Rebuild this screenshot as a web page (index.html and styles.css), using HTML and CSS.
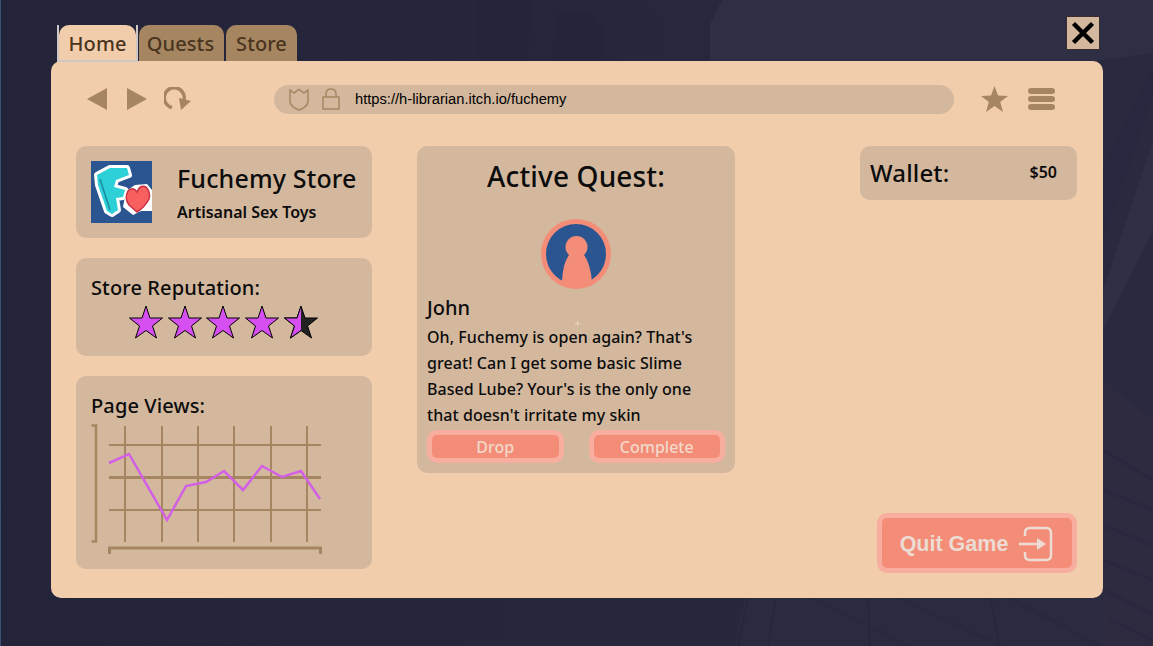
FILE: index.html
```html
<!DOCTYPE html>
<html lang="en">
<head>
  <meta charset="UTF-8">
  <title>Fuchemy Store</title>
  <link rel="stylesheet" href="styles.css">
</head>
<body>
  <!-- faint city backdrop -->
  <svg class="backdrop" viewBox="0 0 1153 646" aria-hidden="true">
    <polygon points="710,0 1153,0 1153,53 930,85 710,85" fill="#2e2e45"/>
    <polygon points="475,0 530,0 528,62 476,62" fill="#24253b"/>
    <polygon points="556,12 590,12 606,30 600,62 552,62" fill="#24253b"/>
    <polygon points="636,0 722,0 708,28 706,62 656,62 664,28" fill="#27273d"/>
    <polygon points="1103,290 1153,140 1153,230 1103,330" fill="#2e2e44"/>
    <polygon points="1103,170 1153,70 1153,95 1103,240" fill="#272740"/>
    <polygon points="745,598 1103,598 1153,590 1153,646 735,646" fill="#2c2a41"/>
    <polygon points="1103,380 1153,420 1153,646 1103,646" fill="#2e2a40"/>
    <path d="M1103 450 L1153 480 M1103 490 L1153 510 M1103 525 L1153 545 M1103 560 L1153 580 M1103 590 L1153 615 M1110 620 L1153 640" stroke="#29283f" stroke-width="3" fill="none"/>
    <path d="M738 646 L748 598 M768 646 L776 598 M870 646 L868 598 M1000 646 L990 598" stroke="#26263c" stroke-width="2" fill="none"/>
    <path d="M812 598 L910 646 M900 598 L1000 646 M1010 598 L1100 646" stroke="#29283f" stroke-width="3" fill="none"/>
  </svg>

  <button class="close-button" aria-label="Close">
    <svg viewBox="0 0 32 32" width="32" height="32"><path d="M6.500 6.500 L25.500 25.500 M25.500 6.500 L6.500 25.500" stroke="#000" stroke-width="4.500"/></svg>
  </button>

  <div class="app">
    <div class="tabs">
      <div class="tab tab-active"><span class="tab-label">Home</span></div>
      <div class="tab tab-quests">Quests</div>
      <div class="tab tab-store">Store</div>
    </div>

    <div class="window">
      <div class="toolbar">
        <div class="nav-icons">
          <svg width="20" height="22" viewBox="0 0 20 22"><polygon points="0,11 20,0 20,22" fill="#a58660"/></svg>
          <svg width="20" height="22" viewBox="0 0 20 22"><polygon points="0,0 20,11 0,22" fill="#a58660"/></svg>
          <svg width="27" height="24" viewBox="0 0 27 24">
            <path d="M8 20.500 A10 10 0 1 1 20 13" fill="none" stroke="#a58660" stroke-width="3.500"/>
            <polygon points="15,11 27,14 17,23" fill="#a58660"/>
          </svg>
        </div>

        <div class="url-bar">
          <svg width="20" height="23" viewBox="0 0 20 23"><path d="M1 2 L5 5 L10 1.500 L15 5 L19 2 V14 Q18 19 10 22 Q2 19 1 14 Z" fill="none" stroke="#a58660" stroke-width="1.500"/></svg>
          <svg width="18" height="22" viewBox="0 0 18 22">
            <rect x="1" y="9" width="16" height="12" fill="none" stroke="#a58660" stroke-width="1.500"/>
            <path d="M4 9 V6 Q4 1 9 1 Q14 1 14 6 V9" fill="none" stroke="#a58660" stroke-width="1.500"/>
          </svg>
          <span class="url-text">https://h-librarian.itch.io/fuchemy</span>
        </div>

        <div class="toolbar-right">
          <svg width="27" height="26" viewBox="0 0 27 26"><polygon points="13.500,0 17,9.500 27,10 19.200,16 22,26 13.500,20 5,26 7.800,16 0,10 10,9.500" fill="#a58660"/></svg>
          <div class="menu-icon"><span></span><span></span><span></span></div>
        </div>
      </div>

      <div class="content">
        <div class="column column-left">
          <div class="panel store-card">
            <svg class="store-logo" width="61" height="62" viewBox="0 0 61 62">
              <rect width="61" height="62" fill="#2a5590"/>
              <path d="M35 30 L44 24 L56 23 L61 29 V50 L50 50 L42 54 L32 46 Z" fill="#fff"/>
              <path d="M6 14 L19 7 L36 7 L38 14 L25 19 L23 26 L34 29 L32 36 L25 37 L27 49 L21 53 L16 50 L7 24 Z" fill="#2dd0d6" stroke="#fff" stroke-width="6" stroke-linejoin="round" paint-order="stroke"/>
              <path d="M9 18 L19 49" stroke="#1b8aa0" stroke-width="1.500" fill="none"/>
              <path d="M46 51 L38 44 Q33 37 37 30 Q42 25 46 31 Q49 23 55 26 Q60 31 58 38 Q54 46 46 51 Z" fill="#f8605f" stroke="#c92f45" stroke-width="1.500"/>
            </svg>
            <div class="store-text">
              <div class="store-name">Fuchemy Store</div>
              <div class="store-tagline">Artisanal Sex Toys</div>
            </div>
          </div>

          <div class="panel reputation">
            <div class="panel-title">Store Reputation:</div>
            <svg class="stars" width="195" height="34" viewBox="0 0 195 34">
              <defs>
                <polygon id="star" points="17,1 21,13 33.500,13 23.500,21 27.500,33 17,25.500 6.500,33 10.500,21 0.500,13 13,13"/>
                <clipPath id="half"><rect x="0" y="0" width="17" height="34"/></clipPath>
              </defs>
              <use href="#star" x="0" fill="#d64ff0" stroke="#000"/>
              <use href="#star" x="39" fill="#d64ff0" stroke="#000"/>
              <use href="#star" x="77" fill="#d64ff0" stroke="#000"/>
              <use href="#star" x="116" fill="#d64ff0" stroke="#000"/>
              <use href="#star" x="155" fill="#222" stroke="#000"/>
              <g transform="translate(155 0)"><use href="#star" fill="#d64ff0" stroke="#000" clip-path="url(#half)"/></g>
            </svg>
          </div>

          <div class="panel page-views">
            <div class="panel-title">Page Views:</div>
            <svg class="chart" width="235" height="132" viewBox="91 424 235 132">
              <path d="M91.500 425.500 H96 V541.500 H91.500" fill="none" stroke="#a58660" stroke-width="2.500"/>
              <path d="M125 426 V542 M162 426 V542 M198 426 V542 M234 426 V542 M271 426 V542 M307 426 V542" stroke="#a58660" stroke-width="2"/>
              <path d="M109 445 H321 M109 510 H321" stroke="#a58660" stroke-width="2"/>
              <path d="M109 477.500 H321" stroke="#a58660" stroke-width="3"/>
              <path d="M109.500 554 V548 H320.500 V554" fill="none" stroke="#a58660" stroke-width="3"/>
              <polyline points="109,463 129,454 167,520 186,486 206,482 224,471 243,490 262,466 282,477 301,471 320,499" fill="none" stroke="#d35fe6" stroke-width="2.500"/>
            </svg>
          </div>
        </div>

        <div class="column column-middle">
          <div class="panel quest">
            <div class="quest-title">Active Quest:</div>
            <svg class="avatar" width="70" height="70" viewBox="0 0 70 70">
              <circle cx="35" cy="35" r="32.500" fill="#2a5590" stroke="#f48d78" stroke-width="5"/>
              <circle cx="35.500" cy="28" r="11" fill="#f48d78"/>
              <path d="M28 36 Q35 33 43 36 Q49 44 51 62 Q35 74 21 62 Q22 44 28 36 Z" fill="#f48d78"/>
            </svg>
            <div class="quest-name">John</div>
            <p class="quest-text">Oh, Fuchemy is open again? That's great! Can I get some basic Slime Based Lube? Your's is the only one that doesn't irritate my skin</p>
            <div class="quest-actions">
              <button class="salmon-button small-button">Drop</button>
              <button class="salmon-button small-button">Complete</button>
            </div>
            <div class="cursor-mark"></div>
          </div>
        </div>

        <div class="column column-right">
          <div class="panel wallet">
            <span class="wallet-label">Wallet:</span>
            <span class="wallet-amount">$50</span>
          </div>
          <button class="salmon-button quit-button">
            <span>Quit Game</span>
            <svg width="36" height="36" viewBox="0 0 36 36" fill="none" stroke="#ecdcd3" stroke-width="2.500">
              <path d="M7 10 V7 Q7 2 12 2 H28 Q33 2 33 7 V29 Q33 34 28 34 H12 Q7 34 7 29 V26"/>
              <path d="M1 18 H21"/>
              <polygon points="19,12 28,18 19,24" fill="#ecdcd3" stroke="none"/>
            </svg>
          </button>
        </div>
      </div>
    </div>
  </div>
</body>
</html>
```

FILE: styles.css
```css
* {
  box-sizing: border-box;
}

html, body {
  height: 100%;
}

body {
  margin: 0;
  overflow: hidden;
  position: relative;
  font-family: "Noto Sans", sans-serif;
  color: #0c0c0c;
  background: linear-gradient(90deg, #23243a 0%, #29293f 100%);
  border-left: 1px solid #3c5379;
}

.backdrop {
  position: absolute;
  top: 0;
  left: -1px;
  width: 1153px;
  height: 646px;
}

.close-button {
  position: absolute;
  top: 17px;
  left: 1066px;
  width: 32px;
  height: 32px;
  padding: 0;
  background-color: #d3b89e;
  border: 0;
  box-shadow: 0 0 0 1px #3a2c30;
  display: flex;
  align-items: center;
  justify-content: center;
}

.app {
  position: relative;
  width: 1052px;
  margin-left: 50px;
  padding-top: 25px;
}

.tabs {
  display: flex;
  height: 36px;
  padding-left: 6px;
  gap: 1px;
}

.tab {
  height: 36px;
  border-radius: 10px 10px 0 0;
  font-size: 20px;
  font-weight: 500;
  letter-spacing: 0.1px;
  line-height: 38px;
  text-align: center;
  color: #4a3420;
  background-color: #a58660;
}

.tab-active {
  width: 81px;
  height: 37px;
  padding: 0;
  background: none;
  border: 2px solid #cfc6c6;
  border-top: 0;
  border-radius: 0;
  position: relative;
  z-index: 1;
}

.tab-label {
  display: block;
  height: 35px;
  border-radius: 10px 10px 0 0;
  background-color: #f2cdac;
  line-height: 38px;
}

.tab-quests {
  width: 85px;
  padding-right: 2px;
}

.tab-store {
  width: 71px;
  margin-left: 1px;
}

.window {
  height: 537px;
  background-color: #f2cdac;
  border-radius: 10px;
  padding: 0 26px 0 25px;
}

.toolbar {
  height: 85px;
  display: flex;
  align-items: center;
  padding-bottom: 9px;
}

.nav-icons {
  display: flex;
  align-items: center;
  gap: 20px;
  width: 198px;
  padding-left: 11px;
}

.nav-icons svg:last-child {
  margin-left: -3px;
}

.url-bar {
  width: 680px;
  height: 29px;
  border-radius: 15px;
  background-color: #d3b89e;
  display: flex;
  align-items: center;
  gap: 13px;
  padding-left: 15px;
}

.url-text {
  margin-left: 2px;
  font-family: "Liberation Sans", sans-serif;
  font-size: 14.700px;
  color: #000;
}

.toolbar-right {
  display: flex;
  align-items: center;
  gap: 20px;
  margin-left: 27px;
}

.menu-icon {
  width: 27px;
  display: flex;
  flex-direction: column;
  gap: 2px;
}

.menu-icon span {
  height: 6px;
  border-radius: 3px;
  background-color: #a58660;
}

.content {
  display: grid;
  grid-template-columns: 296px 318px 217px;
  column-gap: 45px;
  height: 427px;
}

.column-right {
  margin-left: 80px;
  width: 217px;
  display: flex;
  flex-direction: column;
  justify-content: space-between;
  align-items: flex-end;
}

.column-left {
  display: flex;
  flex-direction: column;
  gap: 20px;
}

.panel {
  background-color: #d3b89e;
  border-radius: 10px;
}

.panel-title {
  font-size: 20px;
  font-weight: 500;
  letter-spacing: 0.12px;
  line-height: 28px;
}

.store-card {
  height: 92px;
  display: flex;
  align-items: center;
  padding-left: 15px;
  gap: 25px;
}

.store-name {
  font-size: 25px;
  font-weight: 500;
  letter-spacing: 0.15px;
  line-height: 34px;
}

.store-tagline {
  font-size: 16px;
  font-weight: 600;
  line-height: 24px;
  margin-top: 5px;
}

.reputation {
  height: 98px;
  padding: 16px 15px 0;
}

.stars {
  display: block;
  margin: 3px 0 0 38px;
}

.page-views {
  height: 193px;
  padding: 16px 15px 0;
}

.chart {
  display: block;
  margin-top: 4px;
}

.quest {
  position: relative;
  height: 327px;
  padding: 12px 10px 0;
}

.quest-title {
  font-size: 28px;
  font-weight: 500;
  letter-spacing: 0.15px;
  line-height: 36px;
  text-align: center;
}

.avatar {
  display: block;
  margin: 25px auto 0;
}

.quest-name {
  font-size: 20px;
  font-weight: 500;
  line-height: 28px;
  margin-top: 5px;
}

.quest-text {
  margin: 2px 0 0;
  padding-right: 15px;
  font-size: 16px;
  font-weight: 500;
  letter-spacing: 0.06px;
  line-height: 26px;
}

.quest-actions {
  display: flex;
  justify-content: space-between;
  gap: 25px;
  margin-top: 2px;
}

.salmon-button {
  background-color: #f48d78;
  border: 5px solid #f8ae9f;
  border-radius: 10px;
  color: #f2d9c9;
  padding: 0;
}

.small-button {
  flex: 1;
  height: 33px;
  font-family: "Noto Sans", sans-serif;
  font-size: 16px;
  font-weight: 500;
}

.cursor-mark {
  position: absolute;
  left: 158px;
  top: 175px;
  width: 5px;
  height: 5px;
  background:
    linear-gradient(#e6d3c0, #e6d3c0) center / 5px 1px no-repeat,
    linear-gradient(#e6d3c0, #e6d3c0) center / 1px 5px no-repeat;
}

.wallet {
  width: 217px;
  height: 54px;
  display: flex;
  align-items: center;
  justify-content: space-between;
  padding: 0 20px 2px 10px;
}

.wallet-label {
  font-size: 24px;
  font-weight: 500;
  letter-spacing: 0.15px;
}

.wallet-amount {
  font-size: 16px;
  font-weight: 600;
}

.quit-button {
  width: 200px;
  height: 60px;
  display: flex;
  align-items: center;
  justify-content: center;
  gap: 10px;
  padding: 2px 0 0 0;
  font-family: "Liberation Sans", sans-serif;
  font-size: 21.500px;
  font-weight: bold;
  color: #ecdcd3;
}
```
